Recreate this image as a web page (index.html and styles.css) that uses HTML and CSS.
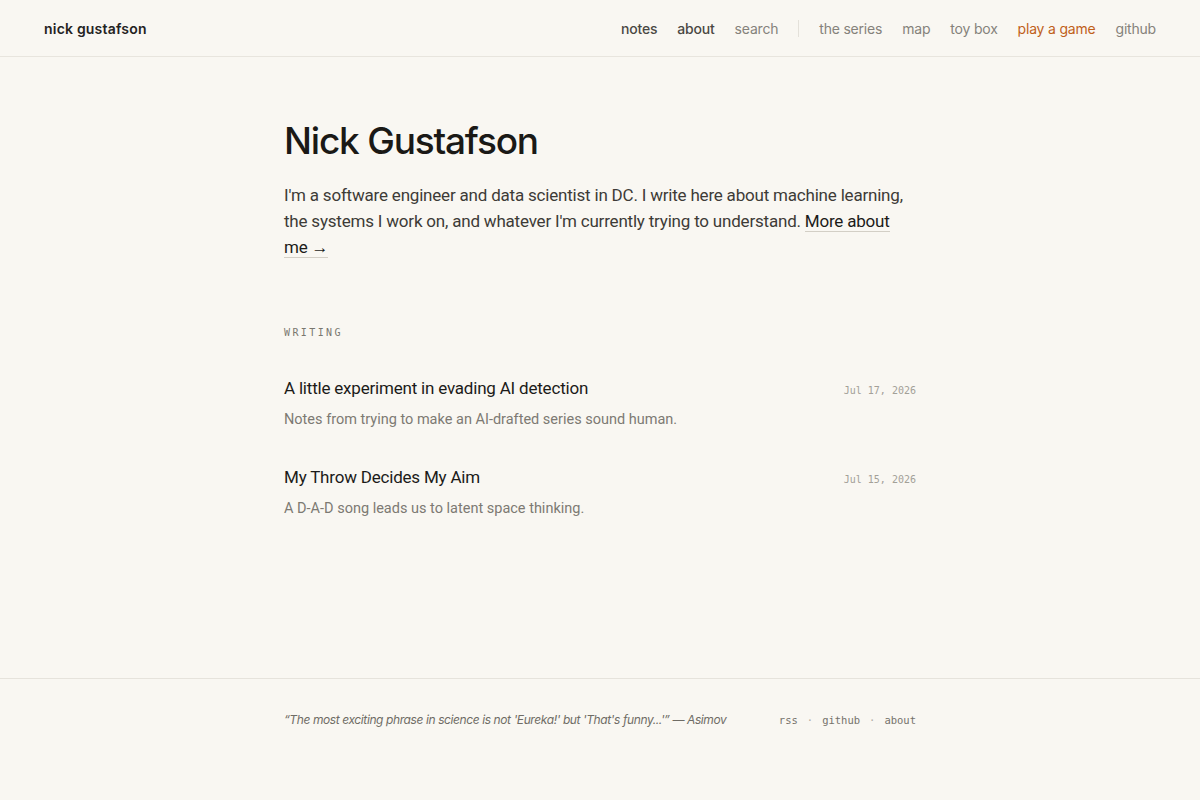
FILE: index.html
```html
<!DOCTYPE html>
<html lang="en">

<head>
    <meta charset="UTF-8">
    <meta name="viewport" content="width=device-width, initial-scale=1.0">
    <title>nick gustafson</title>
    <link rel="stylesheet" href="styles.css">
</head>

<body>

    <header class="site-header">
        <a class="brand" href="#">nick gustafson</a>
        <nav class="nav">
            <a class="nav-main" href="#">notes</a>
            <a class="nav-main" href="#">about</a>
            <a href="#">search</a>
            <span class="nav-sep"></span>
            <a href="#">the series</a>
            <a href="#">map</a>
            <a href="#">toy box</a>
            <a class="nav-game" href="#">play a game</a>
            <a href="#">github</a>
        </nav>
    </header>

    <main class="page">
        <h1>Nick Gustafson</h1>
        <p class="intro">I'm a software engineer and data scientist in DC. I write here about machine learning,
            the systems I work on, and whatever I'm currently trying to understand. <a href="#">More about
                me&nbsp;&rarr;</a></p>

        <section class="writing">
            <h2 class="label">Writing</h2>

            <article class="post">
                <div class="post-head">
                    <a class="post-title" href="#">A little experiment in evading AI detection</a>
                    <time>Jul 17, 2026</time>
                </div>
                <p class="post-desc">Notes from trying to make an AI-drafted series sound human.</p>
            </article>

            <article class="post">
                <div class="post-head">
                    <a class="post-title" href="#">My Throw Decides My Aim</a>
                    <time>Jul 15, 2026</time>
                </div>
                <p class="post-desc">A D-A-D song leads us to latent space thinking.</p>
            </article>
        </section>
    </main>

    <footer class="site-footer">
        <div class="footer-inner">
            <p class="quote">&ldquo;The most exciting phrase in science is not 'Eureka!' but 'That's funny...'&rdquo; &mdash; Asimov</p>
            <div class="footer-links">
                <a href="#">rss</a><span>&middot;</span><a href="#">github</a><span>&middot;</span><a href="#">about</a>
            </div>
        </div>
    </footer>

</body>

</html>
```

FILE: styles.css
```css
* {
    margin: 0;
    padding: 0;
    box-sizing: border-box;
}

body {
    background: #f9f7f2;
    color: #1c1b19;
    font-family: 'Inter', 'Liberation Sans', sans-serif;
    min-height: 100vh;
    display: flex;
    flex-direction: column;
}

a {
    color: inherit;
    text-decoration: none;
}

.site-header {
    height: 57px;
    border-bottom: 1px solid #e8e5de;
    display: flex;
    align-items: center;
    justify-content: space-between;
    padding: 0 44px;
}

.brand {
    font-size: 14px;
    font-weight: 600;
    color: #24231f;
    letter-spacing: 0.2px;
}

.nav {
    display: flex;
    align-items: center;
    gap: 20px;
    font-size: 14px;
    color: #85827b;
    letter-spacing: -0.2px;
}

.nav-main {
    color: #4a4843;
    font-weight: 500;
}

.nav-game {
    color: #c0601a;
}

.nav-sep {
    width: 1px;
    height: 17px;
    background: #e4e1da;
}

.page {
    width: 632px;
    margin: 0 auto;
    padding-top: 62px;
    flex: 1;
}

h1 {
    font-size: 37px;
    font-weight: 500;
    letter-spacing: -1.2px;
    color: #1a1916;
    line-height: 44px;
}

.intro {
    margin-top: 19px;
    font-family: 'Roboto', 'Liberation Sans', sans-serif;
    font-size: 17px;
    line-height: 26px;
    color: #3d3b37;
    letter-spacing: -0.2px;
}

.intro a {
    color: #1c1b19;
    border-bottom: 1px solid #d3cfc6;
}

.writing {
    margin-top: 67px;
}

.label {
    font-family: 'DejaVu Sans Mono', 'Liberation Mono', monospace;
    font-size: 10px;
    font-weight: 400;
    letter-spacing: 2.4px;
    text-transform: uppercase;
    color: #7a776f;
    margin-bottom: 40px;
}

.post {
    margin-bottom: 39px;
    font-family: 'Roboto', 'Liberation Sans', sans-serif;
}

.post-head {
    display: flex;
    justify-content: space-between;
    align-items: baseline;
}

.post-title {
    font-size: 17px;
    font-weight: 400;
    color: #1c1b19;
    letter-spacing: -0.2px;
}

.post-head time {
    font-family: 'DejaVu Sans Mono', 'Liberation Mono', monospace;
    font-size: 10px;
    color: #a3a098;
}

.post-desc {
    margin-top: 13px;
    font-size: 14.5px;
    color: #7d7a73;
}

.site-footer {
    border-top: 1px solid #e6e3dc;
    height: 122px;
}

.footer-inner {
    width: 632px;
    margin: 0 auto;
    padding-top: 33px;
    display: flex;
    justify-content: space-between;
    align-items: baseline;
}

.quote {
    font-size: 12px;
    font-style: italic;
    color: #6f6c65;
    letter-spacing: -0.4px;
}

.footer-links {
    font-family: 'DejaVu Sans Mono', 'Liberation Mono', monospace;
    font-size: 10.5px;
    color: #75726b;
    display: flex;
    gap: 9px;
}

.footer-links span {
    color: #b2aea6;
}
```
